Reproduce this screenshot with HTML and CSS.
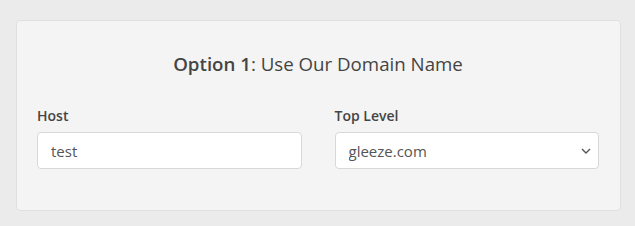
FILE: index.html
```html
<!DOCTYPE html>
<html lang="en">
<head>
    <meta charset="UTF-8">
    <meta name="viewport" content="width=device-width, initial-scale=1.0">
    <title>Domain</title>
<link rel="stylesheet" href="styles.css">
</head>
<body>
    <div class="panel">
        <h3 class="panel-title"><strong>Option 1</strong>: Use Our Domain Name</h3>
        <div class="form-row">
            <div class="form-group">
                <label for="host">Host</label>
                <input id="host" class="form-control" type="text" value="test">
            </div>
            <div class="form-group">
                <label for="tld">Top Level</label>
                <div class="select-wrap">
                    <select id="tld" class="form-control">
                        <option>gleeze.com</option>
                    </select>
                    <svg class="caret" width="10" height="6" viewBox="0 0 10 6"><path d="M1 1l4 4 4-4" fill="none" stroke="#555" stroke-width="1.4"/></svg>
                </div>
            </div>
        </div>
    </div>
</body>
</html>
```

FILE: styles.css
```css
body {
    font-family: 'Open Sans', sans-serif;
    margin: 0;
    padding: 20px 14px 15px 16px;
    background: #ebebeb;
    color: #444;
}

.panel {
    background: #f4f4f4;
    border: 1px solid #e0e0e0;
    border-radius: 4px;
    padding: 30px 21px 41px 20px;
}

.panel-title {
    margin: 0 0 30px;
    text-align: center;
    font-size: 18.7px;
    font-weight: 400;
    color: #444;
}

.panel-title strong {
    font-weight: 600;
}

.form-row {
    display: grid;
    grid-template-columns: 1fr 1fr;
    gap: 33px;
}

.form-group label {
    display: block;
    font-size: 14px;
    font-weight: 600;
    color: #444;
    margin-bottom: 7px;
}

.form-control {
    display: block;
    box-sizing: border-box;
    width: 100%;
    height: 37px;
    padding: 0 13px;
    border: 1px solid #d8d8d8;
    border-radius: 4px;
    background: #fff;
    font-family: inherit;
    font-size: 15px;
    color: #555;
    appearance: none;
    -webkit-appearance: none;
    outline: none;
}

.select-wrap {
    position: relative;
}

.caret {
    position: absolute;
    right: 8px;
    top: 16px;
}
```
